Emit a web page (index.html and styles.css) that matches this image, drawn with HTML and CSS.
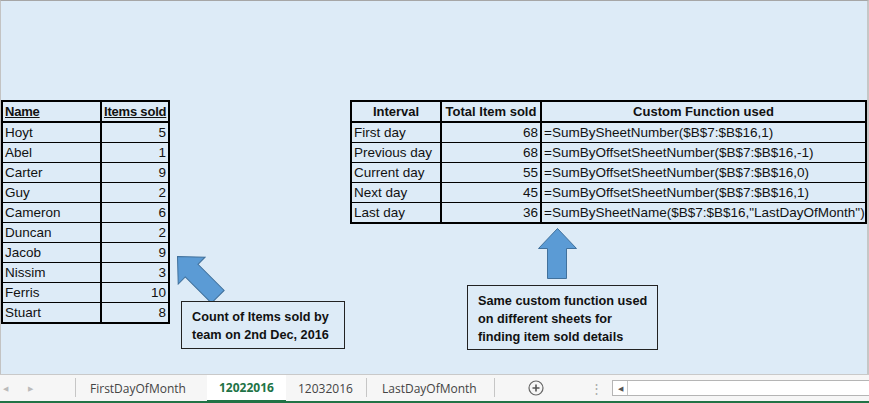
FILE: index.html
```html
<!DOCTYPE html>
<html>
<head>
<meta charset="utf-8">
<link rel="stylesheet" href="styles.css">
</head>
<body>
<div class="sheet">
  <div class="tables">
    <table class="grid left">
      <colgroup><col class="c-name"><col class="c-items"></colgroup>
      <thead>
        <tr><th class="u">Name</th><th class="u">Items sold</th></tr>
      </thead>
      <tbody>
        <tr><td>Hoyt</td><td class="num">5</td></tr>
        <tr><td>Abel</td><td class="num">1</td></tr>
        <tr><td>Carter</td><td class="num">9</td></tr>
        <tr><td>Guy</td><td class="num">2</td></tr>
        <tr><td>Cameron</td><td class="num">6</td></tr>
        <tr><td>Duncan</td><td class="num">2</td></tr>
        <tr><td>Jacob</td><td class="num">9</td></tr>
        <tr><td>Nissim</td><td class="num">3</td></tr>
        <tr><td>Ferris</td><td class="num">10</td></tr>
        <tr><td>Stuart</td><td class="num">8</td></tr>
      </tbody>
    </table>
    <table class="grid right">
      <colgroup><col class="c-int"><col class="c-tot"><col class="c-fn"></colgroup>
      <thead>
        <tr><th class="ctr">Interval</th><th class="ctr">Total Item sold</th><th class="ctr">Custom Function used</th></tr>
      </thead>
      <tbody>
        <tr><td>First day</td><td class="num">68</td><td>=SumBySheetNumber($B$7:$B$16,1)</td></tr>
        <tr><td>Previous day</td><td class="num">68</td><td>=SumByOffsetSheetNumber($B$7:$B$16,-1)</td></tr>
        <tr><td>Current day</td><td class="num">55</td><td>=SumByOffsetSheetNumber($B$7:$B$16,0)</td></tr>
        <tr><td>Next day</td><td class="num">45</td><td>=SumByOffsetSheetNumber($B$7:$B$16,1)</td></tr>
        <tr><td>Last day</td><td class="num">36</td><td>=SumBySheetName($B$7:$B$16,"LastDayOfMonth")</td></tr>
      </tbody>
    </table>
  </div>

  <svg class="arrow arrow-diag" width="60" height="60" viewBox="0 0 60 60">
    <g transform="translate(30 30) rotate(-45)">
      <polygon points="0,-29 19,-9 9,-9 9,28 -9,28 -9,-9 -19,-9" fill="#5B9BD5" stroke="#41719C" stroke-width="1"/>
    </g>
  </svg>
  <svg class="arrow arrow-up" width="40" height="52" viewBox="0 0 40 52">
    <polygon points="19.5,0.5 38.5,20.5 28.5,20.5 28.5,50.5 9.5,50.5 9.5,20.5 0.5,20.5" fill="#5B9BD5" stroke="#41719C" stroke-width="1"/>
  </svg>

  <div class="callout callout-1">Count of Items sold by<br>team on 2nd Dec, 2016</div>
  <div class="callout callout-2">Same custom function used<br>on different sheets for<br>finding item sold details</div>
</div>

<div class="tabbar">
  <div class="navs">
    <span class="nav">&#9664;</span>
    <span class="nav">&#9654;</span>
  </div>
  <span class="sep"></span>
  <span class="tab t-first">FirstDayOfMonth</span>
  <span class="tab active">12022016</span>
  <span class="tab t-third">12032016</span>
  <span class="sep"></span>
  <span class="tab t-last">LastDayOfMonth</span>
  <span class="sep"></span>
  <span class="add">
    <svg width="16" height="16" viewBox="0 0 16 16"><circle cx="8" cy="8" r="7" fill="none" stroke="#666" stroke-width="1.2"/><path d="M8 4.5v7M4.5 8h7" stroke="#555" stroke-width="1.6"/></svg>
  </span>
  <span class="dots">&#8942;</span>
  <div class="hscroll">
    <span class="sbtn">&#9664;</span>
  </div>
</div>
</body>
</html>
```

FILE: styles.css
```css
html, body {
  margin: 0;
  padding: 0;
  background: #ffffff;
}

body {
  width: 869px;
  height: 403px;
  overflow: hidden;
  font-family: "Liberation Sans", Arial, sans-serif;
}

.sheet {
  position: relative;
  box-sizing: border-box;
  height: 374px;
  background: #DDEBF7;
  border-top: 1px solid #a6a6a6;
  border-left: 1px solid #c3c3c3;
  border-right: 2px solid #c6c6c6;
}

.tables {
  display: flex;
  align-items: flex-start;
  padding-top: 99px;
}

.grid {
  border-collapse: collapse;
  table-layout: fixed;
  font-size: 13.5px;
  color: #111;
  border: 2px solid #000;
}

.grid th,
.grid td {
  height: 19px;
  line-height: 19px;
  padding: 0 2px;
  white-space: nowrap;
  overflow: hidden;
  border-bottom: 1px solid #000;
  border-right: 2px solid #000;
  text-align: left;
}

.grid th {
  font-weight: bold;
  font-size: 13px;
  border-bottom: 2px solid #000;
}

.grid th.u {
  text-decoration: underline;
  letter-spacing: -0.2px;
}

.grid th.ctr {
  text-align: center;
}

.grid td.num {
  text-align: right;
}

.left {
  width: 167px;
}

.c-name { width: 99px; }
.c-items { width: 68px; }

.right {
  width: 515px;
  margin-left: 180px;
}

.c-int { width: 90px; }
.c-tot { width: 100px; }
.c-fn { width: 325px; }

.arrow {
  position: absolute;
}

.arrow-diag {
  left: 167px;
  top: 246px;
}

.arrow-up {
  left: 537px;
  top: 227px;
}

.callout {
  position: absolute;
  box-sizing: border-box;
  border: 1px solid #222;
  background: #DDEBF7;
  font-weight: bold;
  font-size: 12.7px;
  line-height: 18px;
  color: #111;
  padding: 6px 0 0 10px;
}

.callout-1 {
  left: 180px;
  top: 300px;
  width: 164px;
  height: 48px;
}

.callout-2 {
  left: 466px;
  top: 284px;
  width: 191px;
  height: 65px;
}

.tabbar {
  box-sizing: border-box;
  height: 29px;
  display: flex;
  align-items: stretch;
  background: #f6f6f6;
  border-top: 1px solid #c9c9c9;
  border-bottom: 2px solid #217346;
  font-family: "Open Sans", "Liberation Sans", sans-serif;
  font-size: 12px;
  color: #444;
}

.tabbar > * {
  flex: none;
}

.navs {
  display: flex;
  align-items: center;
  width: 75px;
  padding-left: 3px;
  box-sizing: border-box;
  gap: 20px;
}

.nav {
  font-size: 7px;
  color: #bbb;
}

.sep {
  width: 1px;
  background: #c6c6c6;
  margin: 3px 0 4px;
}

.tab {
  display: flex;
  align-items: center;
  box-sizing: border-box;
  white-space: nowrap;
}

.t-first {
  padding-left: 14px;
  width: 131px;
}

.tab.active {
  background: #ffffff;
  color: #217346;
  font-weight: bold;
  border-bottom: 3px solid #217346;
  margin-bottom: -2px;
  padding-left: 12px;
  width: 79px;
}

.t-third {
  padding-left: 12px;
  width: 80px;
}

.t-last {
  padding-left: 15px;
  width: 127px;
}

.add {
  display: flex;
  align-items: center;
  padding-left: 33px;
  width: 26px;
}

.dots {
  display: flex;
  align-items: center;
  margin-left: 36px;
  color: #aaa;
  font-size: 13px;
}

.tabbar > .hscroll {
  flex: 1;
  margin: 5px 0 5px 9px;
  background: #fff;
  border: 1px solid #b5b5b5;
  border-right: none;
  display: flex;
}

.sbtn {
  width: 14px;
  border-right: 1px solid #c6c6c6;
  font-size: 7px;
  color: #555;
  display: flex;
  align-items: center;
  justify-content: center;
}
```
